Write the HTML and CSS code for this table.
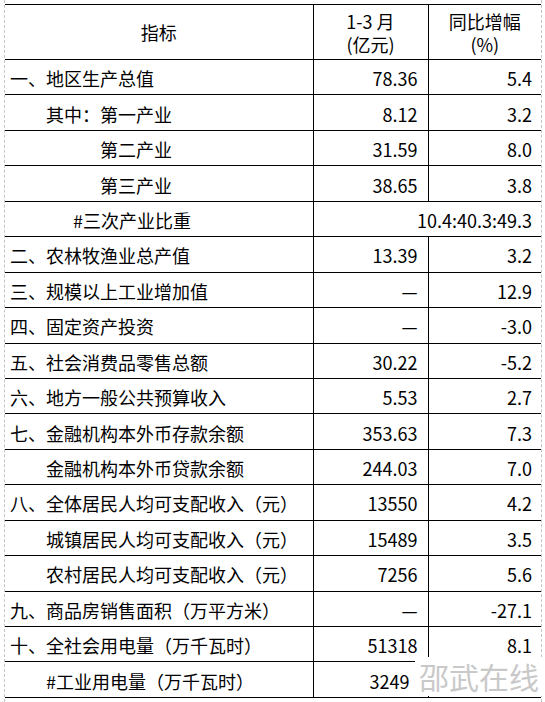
FILE: index.html
```html
<!DOCTYPE html>
<html lang="zh-CN">
<head>
  <meta charset="UTF-8" />
  <title>1-3月主要经济指标</title>
  <link rel="stylesheet" href="styles.css">
</head>
<body>
  <div class="sheet">
    <table class="stats">
      <colgroup>
        <col class="c-name">
        <col class="c-value">
        <col class="c-rate">
      </colgroup>
      <tr class="head">
        <th>指标</th>
        <th>1-3 月<br>(亿元)</th>
        <th>同比增幅<br>(%)</th>
      </tr>
      <tr><td>一、地区生产总值</td><td>78.36</td><td>5.4</td></tr>
      <tr><td class="ind1">其中：第一产业</td><td>8.12</td><td>3.2</td></tr>
      <tr><td class="ind2">第二产业</td><td>31.59</td><td>8.0</td></tr>
      <tr><td class="ind2">第三产业</td><td>38.65</td><td>3.8</td></tr>
      <tr><td class="ind-hash">#三次产业比重</td><td colspan="2">10.4:40.3:49.3</td></tr>
      <tr><td>二、农林牧渔业总产值</td><td>13.39</td><td>3.2</td></tr>
      <tr><td>三、规模以上工业增加值</td><td>—</td><td>12.9</td></tr>
      <tr><td>四、固定资产投资</td><td>—</td><td>-3.0</td></tr>
      <tr><td>五、社会消费品零售总额</td><td>30.22</td><td>-5.2</td></tr>
      <tr><td>六、地方一般公共预算收入</td><td>5.53</td><td>2.7</td></tr>
      <tr><td>七、金融机构本外币存款余额</td><td>353.63</td><td>7.3</td></tr>
      <tr><td class="ind1">金融机构本外币贷款余额</td><td>244.03</td><td>7.0</td></tr>
      <tr><td>八、全体居民人均可支配收入（元）</td><td>13550</td><td>4.2</td></tr>
      <tr><td class="ind1">城镇居民人均可支配收入（元）</td><td>15489</td><td>3.5</td></tr>
      <tr><td class="ind1">农村居民人均可支配收入（元）</td><td>7256</td><td>5.6</td></tr>
      <tr><td>九、商品房销售面积（万平方米）</td><td>—</td><td>-27.1</td></tr>
      <tr><td>十、全社会用电量（万千瓦时）</td><td>51318</td><td>8.1</td></tr>
      <tr class="last"><td class="ind1">#工业用电量（万千瓦时）</td><td>3249</td><td></td></tr>
    </table>
    <div class="watermark">邵武在线</div>
  </div>
</body>
</html>
```

FILE: styles.css
```css
* {
  box-sizing: border-box;
}
body {
  margin: 0;
  background: #fff;
  font-family: "Noto Sans CJK SC", "Noto Sans", sans-serif;
  color: #000;
}
.sheet {
  position: relative;
  margin-left: 4px;
  width: 538px;
  height: 702px;
  padding-top: 4px;
  border-left: 1px dashed #c4c4c4;
  border-right: 1px dashed #c4c4c4;
}
.stats {
  width: 536px;
  border-collapse: collapse;
  table-layout: fixed;
  font-size: 18px;
}
.c-name { width: 308px; }
.c-value { width: 115px; }
.c-rate { width: 113px; }
.stats th,
.stats td {
  border: 1px solid #000;
  padding: 0;
  font-weight: normal;
  white-space: nowrap;
  line-height: 22px;
}
.stats tr > :first-child { border-left: none; }
.stats tr > :last-child { border-right: none; }
.stats .head {
  height: 55px;
}
.stats .head th {
  text-align: center;
  line-height: 23px;
  padding-top: 1px;
}
.stats tr {
  height: 35.45px;
}
.stats td {
  text-align: right;
  padding-top: 2px;
  padding-right: 10px;
}
.stats td:first-child {
  text-align: left;
  padding-left: 5px;
  padding-right: 0;
}
.stats td:last-child {
  padding-right: 9px;
}
.stats td.ind1 { padding-left: 41px; }
.stats td.ind2 { padding-left: 95px; }
.stats td.ind-hash { padding-left: 68px; }
.stats .last td:nth-child(2) {
  padding-right: 18px;
}
.watermark {
  position: absolute;
  left: 410px;
  top: 657px;
  width: 127px;
  height: 39px;
  background: #fff;
  color: #c9c9c9;
  font-size: 30px;
  line-height: 39px;
  padding-left: 4px;
}
```
